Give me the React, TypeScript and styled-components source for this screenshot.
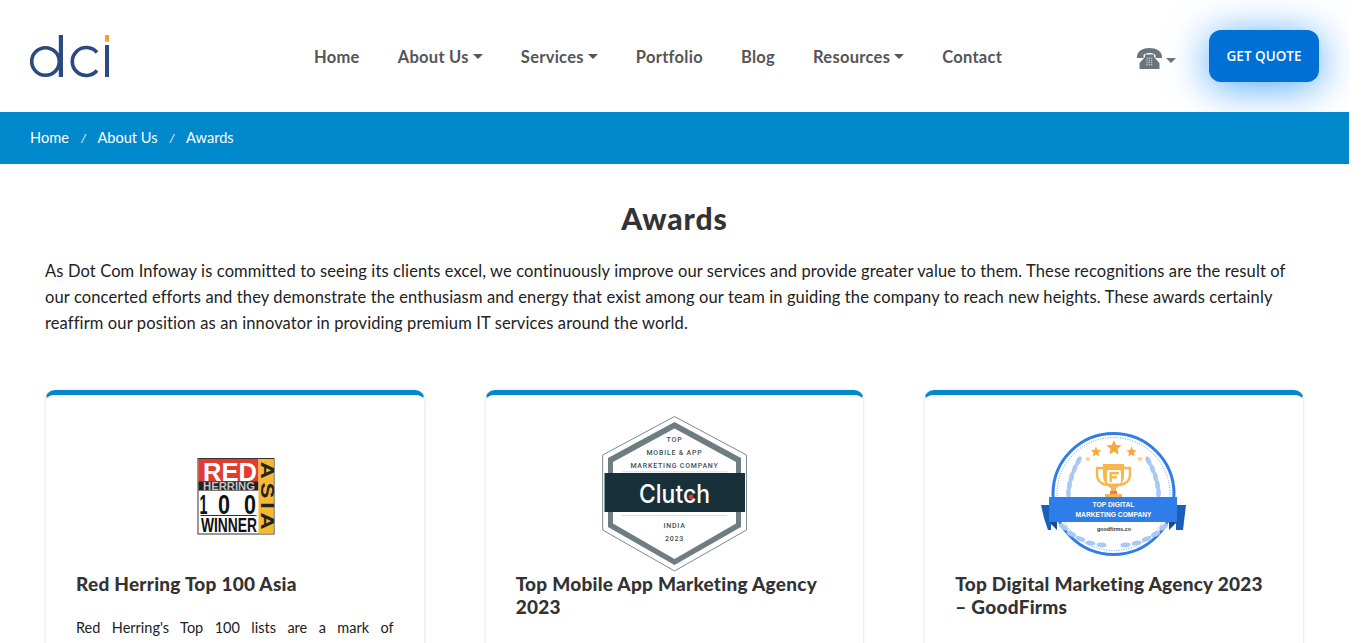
import React from "react";
import styled, { createGlobalStyle } from "styled-components";

const Global = createGlobalStyle`
  html, body { margin: 0; padding: 0; background: #fff; height: 643px; overflow: hidden; }
  * { box-sizing: border-box; }
  body { font-family: Lato, "Noto Sans", sans-serif; }
`;
const Page = styled.div`
  width: 1349px;
  height: 643px;
  overflow: hidden;
`;
const Header = styled.header`
  height: 112px;
  display: flex;
  align-items: center;
  padding: 0 30px;
`;
const Logo = styled.svg`
  display: block;
  width: 80px;
  height: 44px;
  flex: none;
`;
const Nav = styled.nav`
  display: flex;
  align-items: center;
  gap: 38px;
  margin-left: 204px;
  padding-top: 2px;
`;
const NavItem = styled.a`
  display: flex;
  align-items: center;
  gap: 4px;
  font-size: 16.5px;
  letter-spacing: 0.28px;
  font-weight: 700;
  color: #555;
  white-space: nowrap;
`;
const Caret = styled.span`
  display: block;
  width: 0;
  height: 0;
  margin-top: -1px;
  border-left: 5px solid transparent;
  border-right: 5px solid transparent;
  border-top: 5px solid #555;
`;
const PhoneMenu = styled.div`
  margin-left: auto;
  display: flex;
  align-items: center;
  gap: 4px;
  padding-top: 4px;
`;
const PhoneIcon = styled.svg`
  display: block;
  width: 25px;
  height: 21px;
`;
const PhoneCaret = styled(Caret)`
  margin-top: 5px;
  border-top-color: #6c757d;
`;
const QuoteButton = styled.a`
  margin-left: 33px;
  width: 110px;
  height: 52px;
  padding-bottom: 1px;
  display: flex;
  align-items: center;
  justify-content: center;
  border-radius: 12px;
  background: #006fd6;
  color: #fff;
  font-family: "Open Sans", sans-serif;
  font-size: 13.5px;
  font-weight: 600;
  box-shadow: 0 5px 40px rgba(0, 128, 255, 0.7);
`;
const Crumbs = styled.div`
  position: relative;
  height: 52px;
  display: flex;
  align-items: center;
  padding: 0 30px 1px;
  background: #0088cd;
  color: #fff;
  font-size: 14.6px;
`;
const Sep = styled.span`
  margin: 0 11.5px 0 12px;
  font-size: 12px;
  font-style: italic;
`;
const Content = styled.main`
  padding: 0 45px;
`;
const Title = styled.h1`
  margin: 35px 0 0;
  font-size: 30px;
  line-height: 38px;
  font-weight: 900;
  letter-spacing: 0.9px;
  color: #333;
  text-align: center;
`;
const Intro = styled.p`
  margin: 21px 0 0;
  font-size: 16.5px;
  letter-spacing: 0.12px;
  line-height: 26px;
  color: #222;
`;
const Cards = styled.section`
  margin-top: 54px;
  display: grid;
  grid-template-columns: repeat(3, 1fr);
  gap: 60px;
`;
const Card = styled.article`
  height: 420px;
  border: 1px solid #eee;
  border-top: 5px solid #0088cd;
  border-radius: 10px;
  box-shadow: 0 0 4px rgba(0, 0, 0, 0.06);
  padding: 0 30px;
`;
const LogoBox = styled.div`
  height: 177px;
  padding-top: 21px;
  display: flex;
  align-items: center;
  justify-content: center;
`;
const Badge = styled.svg`
  display: block;
  flex: none;
`;
const CardTitle = styled.h3`
  margin: 0;
  font-size: 19px;
  line-height: 23px;
  font-weight: 900;
  letter-spacing: 0.25px;
  color: #333;
`;
const CardText = styled.p`
  margin: 21px 0 0;
  font-size: 14.5px;
  line-height: 24px;
  color: #222;
  text-align: justify;
`;

const DciLogo = () => (
  <Logo viewBox="30 34 80 44" role="img" aria-label="dci">
    <g fill="none" stroke="#2b4a80" strokeWidth="3.6">
      <circle cx="45.5" cy="61.5" r="13.8" />
      <path d="M97 52.5A14 14 0 1 0 97 70.5" />
    </g>
    <rect x="58.8" y="35" width="4.2" height="42" fill="#2b4a80" />
    <rect x="105" y="45" width="4" height="32" fill="#2b4a80" />
    <rect x="105" y="35" width="4" height="6.6" fill="#f7a12c" />
  </Logo>
);

const Phone = () => (
  <PhoneIcon viewBox="0 0 25 21" aria-hidden="true">
    <path d="M0 9C0 3 6 0 12.5 0S25 3 25 9V10H18.5V7.5C18.5 6 15.5 5 12.5 5S6.5 6 6.5 7.5V10H0Z" fill="#6c757d" />
    <path d="M8 6.5H17V9L22.5 15V21H2.5V15L8 9Z" fill="#6c757d" />
    <g fill="#c3c8cc">
      {[9.5, 11.7, 13.9, 16.1].map((y) =>
        [9.5, 11.7, 13.9].map((x) => <rect key={`${x}-${y}`} x={x} y={y} width="1.3" height="1.3" />)
      )}
    </g>
  </PhoneIcon>
);

const RedHerring = () => (
  <Badge width={130} height={110} viewBox="0 -1 130 110" role="img" aria-label="Red Herring Top 100 Asia Winner">
    <rect x="28" y="18.5" width="76" height="75.5" fill="#fff" stroke="#333" strokeWidth="1" />
    <rect x="28.5" y="19" width="60" height="23" fill="#e23b32" />
    <rect x="28.5" y="41.6" width="60" height="9" fill="#222" />
    <rect x="88.5" y="19" width="15" height="74.5" fill="#f6b92f" />
    <g fontFamily="Liberation Sans" fontWeight="700">
      <text x="60" y="41" textAnchor="middle" fontSize="26" fill="#fff" textLength="54" lengthAdjust="spacingAndGlyphs">RED</text>
      <text x="59" y="49.5" textAnchor="middle" fontSize="10.7" fill="#c4c4c4" textLength="52" lengthAdjust="spacingAndGlyphs">HERRING</text>
      <text x="33.5" y="74" textAnchor="middle" fontSize="28" fill="#111" textLength="8" lengthAdjust="spacingAndGlyphs">1</text>
      <text x="54" y="74" textAnchor="middle" fontSize="28" fill="#111" textLength="12" lengthAdjust="spacingAndGlyphs">0</text>
      <text x="80" y="74" textAnchor="middle" fontSize="28" fill="#111" textLength="12" lengthAdjust="spacingAndGlyphs">0</text>
      <text x="59" y="92.3" textAnchor="middle" fontSize="20.5" fill="#111" textLength="56" lengthAdjust="spacingAndGlyphs">WINNER</text>
      <text transform="translate(90.5 21.7) rotate(90) scale(1.35 1)" fontSize="17.6" fill="#222" textLength="50.4" lengthAdjust="spacing">ASIA</text>
    </g>
    <rect x="30.5" y="75" width="56" height="1" fill="#333" />
  </Badge>
);

const Clutch = () => (
  <Badge width={170} height={156} viewBox="-1 6 170 156" role="img" aria-label="Clutch Top Mobile and App Marketing Company India 2023">
    <polygon points="84.5,6.5 156.5,45 156.5,120 84.5,161 12.7,120 12.7,45" fill="#fff" stroke="#7d8a8e" strokeWidth="1" />
    <polygon points="84.5,12 151,48 151,117 84.5,155 18,117 18,48" fill="#6f7d82" />
    <polygon points="84.5,18.5 146,52 146,113.5 84.5,149 23,113.5 23,52" fill="#fff" />
    <rect x="14.5" y="63" width="140.5" height="39" fill="#17303a" />
    <g fontFamily="Roboto" fontWeight="500" fontSize="7" fill="#3f5058" textAnchor="middle" letterSpacing="0.8">
      <text x="84.5" y="31.5">TOP</text>
      <text x="84.5" y="44.5">MOBILE &amp; APP</text>
      <text x="84.5" y="57.5">MARKETING COMPANY</text>
      <text x="84.5" y="117.5">INDIA</text>
      <text x="84.5" y="130.5">2023</text>
    </g>
    <rect x="32" y="61.5" width="105" height="0.8" fill="#ccd2d4" />
    <rect x="32" y="105" width="105" height="0.8" fill="#ccd2d4" />
    <text x="84.5" y="93" textAnchor="middle" fontFamily="Inter, Liberation Sans" fontWeight="500" fontSize="25" fill="#fff" textLength="71" lengthAdjust="spacingAndGlyphs">Clutch</text>
    <circle cx="101" cy="87" r="2.4" fill="#e5372c" />
  </Badge>
);

const star = (cx: number, cy: number, r: number) => {
  const pts: string[] = [];
  for (let i = 0; i < 10; i++) {
    const rad = i % 2 === 0 ? r : r * 0.45;
    const a = (-90 + i * 36) * (Math.PI / 180);
    pts.push(`${(cx + rad * Math.cos(a)).toFixed(2)},${(cy + rad * Math.sin(a)).toFixed(2)}`);
  }
  return pts.join(" ");
};

const leaves: [number, number, number][] = [
  [-35, -33, 25], [-39, -25, 18], [-42, -17, 12], [-44, -9, 6], [-45, -1, 0],
  [-50, 33, -55], [-42, 40, -65], [-33, 45, -72], [-23, 49, -80], [-12, 51, -88],
];

const GoodFirms = () => (
  <Badge width={170} height={140} viewBox="0 -1 170 140" role="img" aria-label="GoodFirms Top Digital Marketing Company">
    <circle cx="84.5" cy="69" r="60.5" fill="#fff" stroke="#2f7de8" strokeWidth="3" />
    <circle cx="84.5" cy="69" r="56.5" fill="none" stroke="#5a9bee" strokeWidth="1" strokeDasharray="1 1.5" />
    {leaves.map(([x, y, r], i) => (
      <g key={i} fill="#a9c9f5">
        <ellipse cx={84.5 + x} cy={69 + y} rx="2.4" ry="5" transform={`rotate(${r} ${84.5 + x} ${69 + y})`} />
        <ellipse cx={84.5 - x} cy={69 + y} rx="2.4" ry="5" transform={`rotate(${-r} ${84.5 - x} ${69 + y})`} />
      </g>
    ))}
    <polygon points={star(85, 23, 8)} fill="#f8a73a" />
    <polygon points={star(67, 27, 5.5)} fill="#f8a73a" />
    <polygon points={star(102.5, 27, 5.5)} fill="#f8a73a" />
    <polygon points={star(59, 34, 3)} fill="#fbc983" />
    <polygon points={star(111, 34, 3)} fill="#fbc983" />
    <path d="M74 43H68V50C68 56 73 59 78 60M95 43H101V50C101 56 96 59 91 60" fill="none" stroke="#f8b64c" strokeWidth="2.4" />
    <path d="M74 39H95V50C95 58 90 62 87 63V69H82V63C79 62 74 58 74 50Z" fill="#f8b64c" />
    <rect x="78" y="45" width="14" height="13.5" rx="2" fill="#fff" />
    <rect x="82" y="47" width="8" height="2.4" fill="#f8b64c" />
    <rect x="82" y="51" width="6" height="2.4" fill="#f8b64c" />
    <rect x="80.5" y="47" width="2.4" height="10" fill="#f8b64c" />
    <rect x="81" y="66" width="7" height="3.5" fill="#f2785c" />
    <rect x="76" y="69" width="17" height="3" fill="#f8b64c" />
    <polygon points="12,80 22,80 22,105 28,105 19,105 15,93" fill="#1a5fb8" />
    <polygon points="157,80 147,80 147,105 150,105 154,105" fill="#1a5fb8" />
    <polygon points="20,97 28,97 28,105" fill="#1a4a8a" />
    <polygon points="148,97 140,97 140,105" fill="#1a4a8a" />
    <rect x="20" y="72" width="128" height="25" fill="#2f7de8" />
    <g fontFamily="Liberation Sans" fontWeight="700" fontSize="7.6" fill="#fff" textAnchor="middle">
      <text x="84.5" y="82" textLength="42" lengthAdjust="spacingAndGlyphs">TOP DIGITAL</text>
      <text x="84.5" y="92" textLength="76" lengthAdjust="spacingAndGlyphs">MARKETING COMPANY</text>
    </g>
    <text x="85" y="105.5" textAnchor="middle" fontFamily="Liberation Sans" fontWeight="700" fontSize="6" fill="#333" textLength="34" lengthAdjust="spacingAndGlyphs">goodfirms.co</text>
  </Badge>
);

const navItems: [string, boolean][] = [
  ["Home", false],
  ["About Us", true],
  ["Services", true],
  ["Portfolio", false],
  ["Blog", false],
  ["Resources", true],
  ["Contact", false],
];

export default function App() {
  return (
    <Page>
      <Global />
      <Header>
        <DciLogo />
        <Nav>
          {navItems.map(([label, menu]) => (
            <NavItem key={label}>
              {label}
              {menu && <Caret />}
            </NavItem>
          ))}
        </Nav>
        <PhoneMenu>
          <Phone />
          <PhoneCaret />
        </PhoneMenu>
        <QuoteButton>GET QUOTE</QuoteButton>
      </Header>
      <Crumbs>
        Home<Sep>/</Sep>About Us<Sep>/</Sep>Awards
      </Crumbs>
      <Content>
        <Title>Awards</Title>
        <Intro>
          As Dot Com Infoway is committed to seeing its clients excel, we continuously improve our services and provide greater value to them. These recognitions are the result of our concerted efforts and they demonstrate the enthusiasm and energy that exist among our team in guiding the company to reach new heights. These awards certainly reaffirm our position as an innovator in providing premium IT services around the world.
        </Intro>
        <Cards>
          <Card>
            <LogoBox><RedHerring /></LogoBox>
            <CardTitle>Red Herring Top 100 Asia</CardTitle>
            <CardText>Red Herring's Top 100 lists are a mark of distinction for identifying promising companies and entrepreneurs.</CardText>
          </Card>
          <Card>
            <LogoBox><Clutch /></LogoBox>
            <CardTitle>Top Mobile App Marketing Agency 2023</CardTitle>
            <CardText>Clutch recognised our work for mobile app marketing in India.</CardText>
          </Card>
          <Card>
            <LogoBox><GoodFirms /></LogoBox>
            <CardTitle>Top Digital Marketing Agency 2023 – GoodFirms</CardTitle>
            <CardText>GoodFirms recognised our digital marketing services.</CardText>
          </Card>
        </Cards>
      </Content>
    </Page>
  );
}
